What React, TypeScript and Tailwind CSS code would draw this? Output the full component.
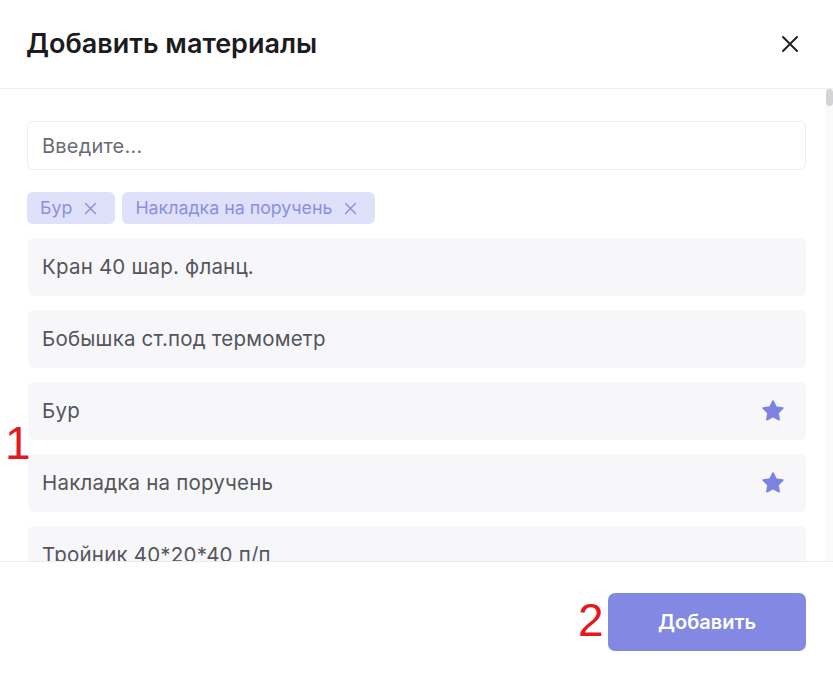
import React from "react";

const items = [
  { name: "Кран 40 шар. фланц.", fav: false },
  { name: "Бобышка ст.под термометр", fav: false },
  { name: "Бур", fav: true },
  { name: "Накладка на поручень", fav: true },
  { name: "Тройник 40*20*40 п/п", fav: false },
  { name: "Отвод 40 п/п", fav: false },
];

const tags = ["Бур", "Накладка на поручень"];

function Cross({ size, className }: { size: number; className?: string }) {
  return (
    <svg width={size} height={size} viewBox="0 0 24 24" fill="none" stroke="currentColor" strokeWidth={2} strokeLinecap="round" className={className}>
      <path d="M5 5l14 14M19 5L5 19" />
    </svg>
  );
}

function Star() {
  return (
    <svg width="26" height="26" viewBox="0 0 24 24" className="text-[#7c83e2]" fill="currentColor" stroke="currentColor" strokeWidth={1.6} strokeLinejoin="round">
      <path d="M12 2.8l2.8 5.7 6.2.9-4.5 4.4 1.1 6.2L12 17.1 6.4 20l1.1-6.2L3 9.4l6.2-.9z" />
    </svg>
  );
}

export default function App() {
  return (
    <div className="relative w-[833px] h-[676px] bg-white flex flex-col overflow-hidden" style={{ fontFamily: "Inter, 'Noto Sans', sans-serif" }}>
      {/* header */}
      <div className="h-[89px] shrink-0 flex items-center justify-between pl-[26px] pr-[31px] border-b border-[#efeff2]">
        <h1 className="text-[27px] font-semibold text-[#1c1c1f]">Добавить материалы</h1>
        <Cross size={24} className="text-[#222]" />
      </div>

      {/* body */}
      <div className="flex-1 flex min-h-0">
        <div className="flex-1 min-w-0 pl-[27px] pr-[20px] pt-[32px] overflow-hidden">
          <div className="h-[49px] rounded-[6px] border border-[#eeeef1] flex items-center px-[14px] text-[20px] text-[#6b6b73] tracking-[0.2px]">
            Введите...
          </div>
          <div className="flex gap-[7px] mt-[22px]">
            {tags.map((t) => (
              <div key={t} className="h-[32px] rounded-[6px] bg-[#dfe1fa] flex items-center gap-[10px] pl-[13px] pr-[16px] text-[17.8px] text-[#8a90e0]">
                <span>{t}</span>
                <Cross size={17} className="text-[#8a90e0]" />
              </div>
            ))}
          </div>
          <div className="flex flex-col gap-[14px] mt-[14px]">
            {items.map((it) => (
              <div key={it.name} className="h-[58px] shrink-0 rounded-[6px] bg-[#f7f7f9] flex items-center justify-between pl-[14px] pr-[20px] ml-px">
                <span className="text-[20.5px] text-[#55555d] tracking-[0.2px]">{it.name}</span>
                {it.fav && <Star />}
              </div>
            ))}
          </div>
        </div>
        {/* scrollbar */}
        <div className="w-[7px] shrink-0 bg-[#fafafa]">
          <div className="h-[17px] rounded-full bg-[#d4d4d8]" />
        </div>
      </div>

      {/* footer */}
      <div className="h-[115px] shrink-0 border-t border-[#ececf0] bg-white flex items-start justify-end pt-[31px] pr-[27px] relative z-10">
        <button className="w-[198px] h-[58px] rounded-[7px] bg-[#8389e2] text-white text-[20px] font-semibold">
          Добавить
        </button>
      </div>

      {/* annotations */}
      <span className="absolute left-[5px] top-[420px] text-[46px] leading-none text-[#e3191f] z-20" style={{ fontFamily: "'Liberation Sans', sans-serif" }}>1</span>
      <span className="absolute left-[578px] top-[597px] text-[46px] leading-none text-[#e3191f] z-20" style={{ fontFamily: "'Liberation Sans', sans-serif" }}>2</span>
    </div>
  );
}
